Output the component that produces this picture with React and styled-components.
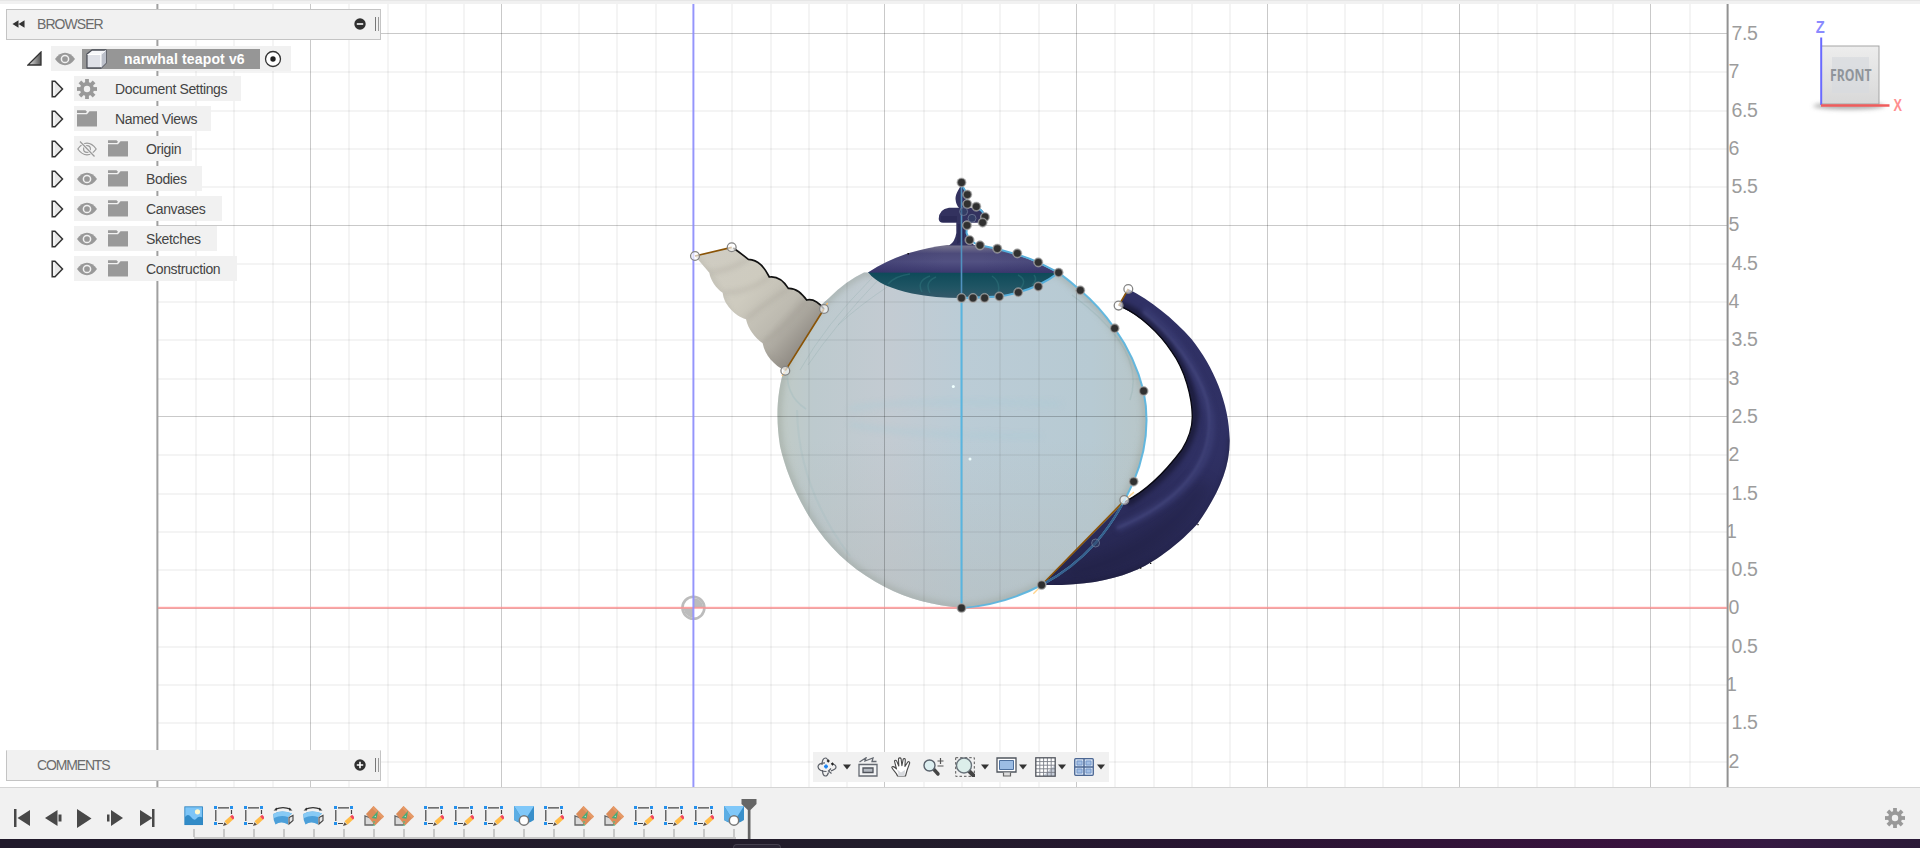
import React from "react";
import styled, { createGlobalStyle } from "styled-components";

const Global = createGlobalStyle`
  * { box-sizing: border-box; }
  body { margin: 0; overflow: hidden; background: #fff; font-family: "Liberation Sans", Arial, sans-serif; }
  svg { display: block; flex: none; }
`;

const Screen = styled.div`
  width: 1920px;
  height: 848px;
  display: flex;
  flex-direction: column;
`;
const TopStrip = styled.div`
  height: 4px;
  background: #f1f1f1;
  border-top: 1px solid #e6e6e6;
`;
const Viewport = styled.main`
  position: relative;
  flex: 1;
  min-height: 0;
  overflow: hidden;
`;
const SceneSvg = styled.svg`
  position: absolute;
  left: 0;
  top: -4px;
`;
const Overlay = styled.div`
  position: relative;
  height: 100%;
  display: flex;
  justify-content: space-between;
  padding: 5px 0 5px 6px;
`;
const LeftDock = styled.aside`
  width: 375px;
  display: flex;
  flex-direction: column;
`;
const PanelHead = styled.div`
  height: 31px;
  display: flex;
  align-items: center;
  background: #f1f1f1;
  border: 1px solid #c4c4c4;
  border-top-color: ${(p) => (p.$open ? "#c4c4c4" : "#f1f1f1")};
  padding: 0 0 1px 5px;
  margin: ${(p) => (p.$open ? "0" : "auto 0 1px")};
`;
const PanelTitle = styled.span`
  flex: 1;
  margin-left: 12px;
  font-size: 14px;
  letter-spacing: ${(p) => p.$tracking}px;
  color: #6b6b6b;
`;
const Collapse = styled.svg`
  width: 13px;
  height: 12px;
`;
const Grip = styled.span`
  width: 4px;
  height: 14px;
  margin: 0 1px 0 9px;
  border-left: 1px solid #777;
  border-right: 1px solid #999;
`;
const Tree = styled.ul`
  list-style: none;
  margin: 6px 0 0;
  padding: 0;
  display: flex;
  flex-direction: column;
  gap: 5px;
`;
const TreeRow = styled.li`
  height: 25px;
  display: flex;
  align-items: center;
  padding-left: ${(p) => (p.$root ? 21 : 45)}px;
`;
const RowBody = styled.div`
  height: 25px;
  width: ${(p) => p.$width}px;
  margin-left: ${(p) => (p.$root ? 9 : 10)}px;
  padding-left: ${(p) => (p.$root ? 4 : 3)}px;
  display: flex;
  align-items: center;
  gap: ${(p) => (p.$root ? 7 : 11)}px;
  background: #f1f1f1;
`;
const RowLabel = styled.span`
  margin-left: 7px;
  font-size: 14px;
  letter-spacing: -0.36px;
  color: #444;
  white-space: nowrap;
`;
const RootChip = styled.div`
  width: 178px;
  height: 20px;
  display: flex;
  align-items: center;
  padding-left: 4px;
  background: #969696;
  color: #fff;
  font-size: 14px;
  font-weight: bold;
  letter-spacing: 0.15px;
  white-space: nowrap;
`;
const ChipText = styled.span`
  margin-left: 17px;
`;
const ActiveMark = styled.svg`
  margin-left: -3px;
`;
const CubeHolder = styled.div`
  width: 120px;
  padding-top: 1px;
`;
const NavDock = styled.div`
  flex: 1;
  display: flex;
  align-items: flex-end;
  padding-left: 432px;
`;
const NavBar = styled.div`
  height: 30px;
  width: 296px;
  display: flex;
  align-items: center;
  background: #f1f1f1;
`;
const Tool = styled.span`
  margin-left: ${(p) => p.$gap}px;
`;
const Timeline = styled.footer`
  height: 52px;
  display: flex;
  background: #f1f1f1;
  border-top: 1px solid #d4d4d4;
`;
const Playback = styled.div`
  display: flex;
  align-items: center;
  gap: 11.7px;
  width: 178.5px;
  height: 60px;
  padding-left: 13px;
`;
const Features = styled.div`
  display: flex;
  flex: 1;
`;
const Feature = styled.div`
  width: 30px;
  height: 51px;
  display: flex;
  flex-direction: column;
  align-items: center;
  padding-top: 18px;
  background: linear-gradient(#c8c8c8, #c8c8c8) ${(p) => (p.$first ? "15px" : "0")} 49px / ${(p) => (p.$last ? "17px" : "100%")} 2px no-repeat;
  &::after {
    content: "";
    width: 2px;
    height: 8px;
    margin-top: 3px;
    background: #c8c8c8;
  }
`;
const Marker = styled.svg`
  margin: 10px 0 0 -8px;
`;
const Settings = styled.div`
  width: 35px;
  padding-top: 20px;
`;
const Desktop = styled.div`
  height: 9px;
  display: flex;
  padding-left: 733px;
  align-items: flex-end;
  background: linear-gradient(90deg, #211a2b 0%, #221d2b 48%, #281532 63%, #3a133f 86%, #351a42 92%, #2b1a38 100%);
`;
const TaskTab = styled.div`
  width: 48px;
  height: 4px;
  border: 1px solid #45404e;
  border-bottom: 0;
  border-radius: 4px 4px 0 0;
  background: #2b2635;
`;

const STEP = 38.3;
const OX = 693.4;
const OY = 608;
const vLines = [];
for (let i = -13; i <= 26; i++) vLines.push(i);
const hLines = [];
for (let i = -4; i <= 15; i++) hLines.push(i);

const dots = [
  [961.5, 182.5], [967.3, 194.6], [967.3, 204], [976.3, 206.6], [985, 217], [982.6, 222.6], [967, 225.3],
  [969.6, 240], [980, 245.3], [997.3, 248.6], [1017.3, 253.3], [1038.3, 262.3], [1058.6, 272.6],
  [1038.3, 286.6], [1018.3, 292.3], [999.3, 296.6], [984.6, 298], [973, 298], [961.5, 298],
  [1080.3, 290.3], [1114.6, 328.3], [1143.6, 391], [1133.6, 481.6], [1041.6, 585], [961.5, 608],
];
const faintDots = [[963.6, 211.6], [972, 218.3], [1095.6, 543]];
const rings = [[695, 256], [731.7, 247.3], [824, 309], [785.3, 370.7], [1128.3, 289], [1118.6, 305.6], [1124.3, 500]];

const BODY_RIGHT =
  "M1058.6 272.6 Q1070 281 1080.3 290.3 Q1100 307 1114.6 328.3 Q1135 357 1143.6 391 C1149 418 1147 450 1133.6 481.6 Q1118 517 1095.6 543 Q1072 569 1041.6 585 Q1004 605 961.5 608";
const BODY =
  BODY_RIGHT + " C933 605 908 599 885 587 C858 573 835 554 818 530 C800 505 786 473 780 446 C776 420 776 395 785 366 C797 328 814 311 829 298 Q846 281 864 272.6 Z";
const SPOUT =
  "M45 78 L155 52 Q180 68 205 88 C236 90 252 110 268 141 C296 137 313 156 325 175 C350 174 366 192 380 210 C400 205 420 222 432 237 L316 422 C283 408 254 374 248 340 C224 322 205 298 198 268 C163 256 131 222 128 188 C108 174 92 152 88 128 Z";
const HANDLE =
  "M385 57 C450 90 520 145 575 208 C640 290 688 400 689 510 C690 600 650 680 592 762 C520 840 440 890 394 906 C320 935 240 947 125 945 L375 695 C440 662 500 600 545 540 C565 508 577 480 577 440 C576 380 555 300 515 245 C480 190 420 135 356 107 Z";
const LID = "M868 272.5 Q885 261 909 253 Q930 247 947 245 L978 245 Q1012 251 1038 263 L1058 273 Z";

function Scene() {
  return (
    <SceneSvg width="1920" height="791" viewBox="0 0 1920 791">
      <defs>
        <linearGradient id="glass" x1="0" x2="1">
          <stop offset="0" stopColor="#c0cac5" />
          <stop offset=".1" stopColor="#bdcace" />
          <stop offset=".3" stopColor="#c3cbd2" />
          <stop offset=".5" stopColor="#bbccd6" />
          <stop offset=".85" stopColor="#b7cad3" />
          <stop offset="1" stopColor="#b8c6c8" />
        </linearGradient>
        <linearGradient id="glassShade" x1="0" x2="0" y1="0" y2="1">
          <stop offset=".5" stopColor="#b3b8b6" stopOpacity="0" />
          <stop offset="1" stopColor="#b3b8b6" stopOpacity=".45" />
        </linearGradient>
        <linearGradient id="lid" x1="0" x2="0" y1="0" y2="1">
          <stop offset="0" stopColor="#7b7890" />
          <stop offset=".3" stopColor="#4d4b7a" />
          <stop offset=".6" stopColor="#525182" />
          <stop offset="1" stopColor="#3b386e" />
        </linearGradient>
        <linearGradient id="lidSide" x1="0" x2="1">
          <stop offset="0" stopColor="#2f2d62" stopOpacity=".4" />
          <stop offset=".4" stopColor="#2f2d62" stopOpacity="0" />
          <stop offset=".6" stopColor="#2f2d62" stopOpacity="0" />
          <stop offset="1" stopColor="#2f2d62" stopOpacity=".3" />
        </linearGradient>
        <linearGradient id="inner" x1="0" x2="0" y1="0" y2="1">
          <stop offset="0" stopColor="#0d4a59" />
          <stop offset=".6" stopColor="#205564" />
          <stop offset="1" stopColor="#35586a" />
        </linearGradient>
        <linearGradient id="ivory" gradientUnits="userSpaceOnUse" x1="80" y1="80" x2="390" y2="340">
          <stop offset="0" stopColor="#cfccc2" />
          <stop offset=".4" stopColor="#cecbbf" />
          <stop offset=".7" stopColor="#bdbab0" />
          <stop offset="1" stopColor="#8e8982" />
        </linearGradient>
        <linearGradient id="navy" gradientUnits="userSpaceOnUse" x1="420" y1="100" x2="560" y2="900">
          <stop offset="0" stopColor="#303165" />
          <stop offset=".6" stopColor="#2f3063" />
          <stop offset="1" stopColor="#25254d" />
        </linearGradient>
        <clipPath id="bodyClip"><path d={BODY} /></clipPath>
        <clipPath id="spoutClip"><path d={SPOUT} /></clipPath>
        <clipPath id="handleClip"><path d={HANDLE} /></clipPath>
        <filter id="b3" colorInterpolationFilters="sRGB" x="-20%" y="-20%" width="140%" height="140%"><feGaussianBlur stdDeviation="3" /></filter>
        <filter id="b8" colorInterpolationFilters="sRGB" x="-50%" y="-50%" width="200%" height="200%"><feGaussianBlur stdDeviation="8" /></filter>
        <filter id="b16" colorInterpolationFilters="sRGB" x="-50%" y="-50%" width="200%" height="200%"><feGaussianBlur stdDeviation="20" /></filter>
      </defs>

      {/* the glass body sits behind the translucent grid */}
      <path d={BODY} fill="url(#glass)" />
      <path d={BODY} fill="url(#glassShade)" />
      <g clipPath="url(#bodyClip)">
        <path d={BODY} fill="none" stroke="#99a39b" strokeOpacity=".55" strokeWidth="7" filter="url(#b3)" />
        <path d="M788 365C785 385 792 400 806 409" fill="none" stroke="#9db9bd" strokeOpacity=".35" strokeWidth="1.5" />
        <path d="M797 410C798 460 815 510 850 556" fill="none" stroke="#9fbcc0" strokeOpacity=".25" strokeWidth="2" />
        <path d="M1072 295C1120 330 1142 365 1130 400" fill="none" stroke="#8fabab" strokeOpacity=".3" strokeWidth="1.5" />
        <path d="M872 278Q825 325 800 370M880 278Q835 325 808 365M890 285Q860 305 838 325" fill="none" stroke="#8fabab" strokeOpacity=".3" />
        <path d="M850 409Q900 398 1060 404M850 424Q900 436 1040 436" fill="none" stroke="#a3cbd8" strokeOpacity=".5" strokeWidth="3" filter="url(#b3)" />
      </g>

      <g shapeRendering="crispEdges">
        {vLines.map((i) => {
          const x = OX + i * STEP;
          return <rect key={i} x={Math.floor(x)} y="4" width={i % 5 ? 2 : 1} height="783" fill="#000" fillOpacity={i % 5 ? 0.045 : 0.21} />;
        })}
        {hLines.map((i) => (
          <rect key={i} x="157" y={Math.floor(OY - i * STEP)} width="1571" height={i % 5 ? 2 : 1} fill="#000" fillOpacity={i % 5 ? 0.045 : 0.21} />
        ))}
      </g>
      <rect x="156.4" y="4" width="2" height="783" fill="#a0a0a0" />
      <rect x="1726.6" y="4" width="2" height="783" fill="#929292" />
      <circle cx="693.4" cy="607.8" r="11" fill="#fff" stroke="#bcbcbc" strokeWidth="2.6" />
      <path d="M693.4 607.8V598A9.800 9.800 0 0 1 703.200 607.800ZM693.400 607.800V617.600A9.800 9.800 0 0 1 683.600 607.800Z" fill="#bcbcbc" />
      <rect x="158" y="606.8" width="1569" height="2" fill="#ff8f8f" fillOpacity=".8" />
      <rect x="692.4" y="4" width="2" height="783" fill="#8f8fff" fillOpacity=".9" />

      <g transform="translate(680 230) scale(.33333)">
        <path d={SPOUT} fill="url(#ivory)" />
        <g clipPath="url(#spoutClip)">
          <path d="M88 128Q140 125 205 88M128 188Q200 190 268 141M198 268Q250 225 325 175M248 340Q315 290 380 210" fill="none" stroke="#77736c" strokeOpacity=".16" strokeWidth="12" filter="url(#b8)" />
          <path d="M45 78Q90 120 130 215Q200 330 316 422" fill="none" stroke="#85857b" strokeOpacity=".18" strokeWidth="12" filter="url(#b8)" />
        </g>
        <path d="M160 54Q180 68 205 88C236 90 252 110 268 141C296 137 313 156 325 175C350 174 366 192 380 210C400 205 420 222 432 237" fill="none" stroke="#111" strokeWidth="5" />
        <path d="M45 78L155 52M432 237L316 422" stroke="#8a5407" strokeWidth="5" />
        <path d="M436 229l7-10M314 426l-8 12" stroke="#ffc26b" strokeWidth="4" />
      </g>

      <path d="M868 272 C876 283 892 289 912 293.5 Q936 298 961 298 Q985 299 1000 296.5 C1025 291 1045 285 1058 272Z" fill="url(#inner)" />
      <path d="M888 284Q895 276 910 274M922 292Q916 281 930 276M930 293Q924 282 936 277M998 293Q1001 282 992 276M1020 289Q1028 280 1018 275M1032 285Q1038 280 1034 275" fill="none" stroke="#337b80" strokeOpacity=".45" strokeWidth="1.5" />
      <path d={LID} fill="url(#lid)" />
      <path d={LID} fill="url(#lidSide)" />
      <path d="M961.5 184C959 190 955.5 193 955.5 199Q956 205 959 207.7L949 207.7Q939 209 938.7 219Q939 222.7 943 222.7L956.3 222.7L956.3 233Q955 242 949 245.5L975 245.5Q966 241 966.5 231L966.5 222.7L980 222.7Q986 222 985 215Q983 208 976 207.7L966 207.7Q969 199 966 191Z" fill="#33325f" />
      <path d="M941 216H957V222H941ZM958 224L964 224L964 240Q958 243 957 244Z" fill="#292854" fillOpacity=".7" />
      <rect x="907.5" y="253" width="1.5" height="1.5" fill="#111" />

      <g transform="translate(1000 270) scale(.33333)">
        <path d={HANDLE} fill="url(#navy)" />
        <g clipPath="url(#handleClip)">
          <path d="M360 105C420 130 480 180 515 235C555 300 584 380 584 440C580 490 560 530 530 570C490 620 440 660 380 700" fill="none" stroke="#191935" strokeOpacity=".85" strokeWidth="24" filter="url(#b8)" />
          <path d="M125 955C300 955 440 905 550 825C650 730 700 610 695 500" fill="none" stroke="#1d1d3c" strokeOpacity=".65" strokeWidth="18" filter="url(#b8)" />
          <path d="M200 910C380 880 540 760 610 640" fill="none" stroke="#191938" strokeOpacity=".3" strokeWidth="50" filter="url(#b16)" />
          <path d="M430 120C520 190 600 300 630 430C650 560 570 680 350 775" fill="none" stroke="#3f4179" strokeOpacity=".7" strokeWidth="22" filter="url(#b8)" />
          <path d="M430 125C510 190 590 290 621 390C650 540 580 680 350 775" fill="none" stroke="#5a5c93" strokeOpacity=".35" strokeWidth="5" filter="url(#b3)" />
        </g>
        <path d="M375 695C440 662 500 600 545 540C565 508 577 480 577 440C576 380 555 300 515 245C480 190 420 135 364 110" fill="none" stroke="#090912" strokeWidth="4" />
        <path d="M385 57L356 107M373 692L125 945" stroke="#8a5407" strokeWidth="5" />
        <path d="M376 690l26-24M120 951l-20 20" stroke="#ffd58e" strokeWidth="4" />
        <path d="M592 764h4M420 894h4M450 880h4" stroke="#111" strokeWidth="4" />
      </g>

      <path d={BODY_RIGHT} fill="none" stroke="#5db5de" strokeWidth="2" strokeOpacity=".95" />
      <path d="M1122 505Q1108 529 1095.6 543Q1072 569 1045 583" fill="none" stroke="#36608d" strokeWidth="2" />
      <path d="M1058.6 272.6L1038.3 262.3Q1012 251 980 245.3Q970 243 966.5 233L967 225M963 187Q967 192 967.3 204M976 207Q983 210 985 217M1058.6 272.6Q1035 291 999.3 296.6L961.5 298" fill="none" stroke="#55aedb" strokeWidth="2" />
      <path d="M961.5 183V298" stroke="#5092c0" strokeWidth="1.6" />
      <path d="M961.5 298V608" stroke="#59b5e0" strokeWidth="2" />
      <circle cx="953.3" cy="386.5" r="1.5" fill="#efffff" />
      <circle cx="970" cy="459" r="1.5" fill="#efffff" />

      {dots.map(([x, y]) => (
        <g key={`${x}-${y}`}>
          <circle cx={x} cy={y} r="4.6" fill="#777" stroke="#b5b5b5" strokeOpacity=".6" strokeWidth="1" />
          <circle cx={x} cy={y} r="3.4" fill="#303030" />
        </g>
      ))}
      {faintDots.map(([x, y]) => (
        <circle key={x} cx={x} cy={y} r="4" fill="#34486b" fillOpacity=".5" stroke="#77819d" strokeOpacity=".7" />
      ))}
      {rings.map(([x, y]) => (
        <circle key={x} cx={x} cy={y} r="4.4" fill="#fff" fillOpacity=".65" stroke="#858585" strokeWidth="1.3" />
      ))}

      <g fontFamily="Liberation Sans, Arial, sans-serif" fontSize="19.5" fill="#9c9c9c">
        {hLines.map((i) => {
          const whole = i % 2 === 0;
          const value = Math.abs(i / 2);
          return (
            <text key={i} x={value === 1 ? 1726 : whole ? 1728.5 : 1731.5} y={OY - i * STEP + 6.4} textLength={whole ? undefined : 26.4}>
              {value}
            </text>
          );
        })}
      </g>
    </SceneSvg>
  );
}

const ViewCube = () => (
  <svg width="110" height="110" viewBox="1800 10 110 110">
    <defs>
      <linearGradient id="face" x1="0" x2="0" y1="0" y2="1">
        <stop offset="0" stopColor="#ededed" />
        <stop offset="1" stopColor="#d8d8d8" />
      </linearGradient>
      <filter id="soft" x="-20%" y="-100%" width="140%" height="300%"><feGaussianBlur stdDeviation="2.2" /></filter>
    </defs>
    <ellipse cx="1849" cy="106" rx="36" ry="3.5" fill="#777" fillOpacity=".6" filter="url(#soft)" />
    <rect x="1821.5" y="46" width="57.5" height="58" fill="url(#face)" stroke="#a5a5a5" />
    <rect x="1832" y="57" width="37" height="36" fill="#d7dade" fillOpacity=".7" />
    <text x="1830" y="80.5" fontFamily="Open Sans, sans-serif" fontWeight="700" fontSize="15.5" fill="#8f949a" textLength="41.5" lengthAdjust="spacingAndGlyphs">FRONT</text>
    <path d="M1821.2 37.5V105" stroke="#6a6aff" strokeWidth="2" />
    <path d="M1821 105.5H1889.5" stroke="#f05c5c" strokeWidth="2.4" />
    <text x="1815.8" y="33" fontFamily="Liberation Sans, sans-serif" fontWeight="700" fontSize="16" fill="#8a8aff" textLength="9" lengthAdjust="spacingAndGlyphs">Z</text>
    <text x="1893.5" y="110.5" fontFamily="Liberation Sans, sans-serif" fontWeight="700" fontSize="16" fill="#ff8f8f" textLength="8.5" lengthAdjust="spacingAndGlyphs">X</text>
  </svg>
);

const Eye = ({ off }) => (
  <svg width="20" height="16" viewBox="0 0 20 16">
    {off ? (
      <g fill="none" stroke="#999" strokeWidth="1.2">
        <path d="M.8 8Q5 2.2 10 2.2T19.2 8Q15 13.8 10 13.8T.8 8Z" />
        <circle cx="10" cy="8" r="3.4" />
        <path d="M3 .5L17.5 15.5" stroke="#f1f1f1" strokeWidth="3" />
        <path d="M3 .5L17.5 15.5" />
      </g>
    ) : (
      <g>
        <path d="M0 8Q4.5 1.8 10 1.8T20 8Q15.5 14.2 10 14.2T0 8Z" fill="#999" />
        <circle cx="10" cy="8" r="3.6" fill="none" stroke="#f1f1f1" strokeWidth="1.5" />
      </g>
    )}
  </svg>
);
const Folder = () => (
  <svg width="20" height="17" viewBox="0 0 20 17" fill="#999">
    <path d="M0 .3H8.5L10 1.8L9 3H0ZM0 4.2H10L12.5 1.2H20V16.5H0Z" />
  </svg>
);
const Gear = () => (
  <svg width="20" height="20" viewBox="-10 -10 20 20">
    {[0, 45, 90, 135].map((a) => (
      <rect key={a} x="-1.9" y="-10" width="3.8" height="20" fill="#999" transform={`rotate(${a})`} />
    ))}
    <circle r="7" fill="#999" />
    <circle r="3.2" fill="#f1f1f1" />
  </svg>
);
const Expander = () => (
  <svg width="13" height="18" viewBox="0 0 13 18">
    <path d="M1.2 1.2H4L11.5 9L4 16.8H1.2Z" fill="#e8e8e8" stroke="#333" strokeWidth="1.5" />
    <path d="M3 2.8V15.2" stroke="#fff" />
  </svg>
);
const RootExpander = () => (
  <svg width="15" height="15" viewBox="0 0 15 15">
    <defs><linearGradient id="tri"><stop offset="0" stopColor="#eee" /><stop offset="1" stopColor="#555" /></linearGradient></defs>
    <path d="M1 14L14 1V14Z" fill="url(#tri)" stroke="#333" strokeWidth="1.3" />
  </svg>
);
const Component = () => (
  <svg width="21" height="20" viewBox="0 0 21 20">
    <path d="M1 5L6 1H20V14L15 19H1Z" fill="#f6f7fa" stroke="#4a4d57" strokeWidth="1.3" strokeLinejoin="round" />
    <path d="M15 5L20 1V14L15 19Z" fill="#bcc0ca" />
    <path d="M2 6H14.5V18H2Z" fill="#dfe1e8" />
    <path d="M15 5.5V18M1.5 5.5H15L19.5 1.5" stroke="#fff" fill="none" />
  </svg>
);
const RoundButton = ({ plus }) => (
  <svg width="12" height="12" viewBox="0 0 12 12">
    <circle cx="6" cy="6" r="5.7" fill="#303030" />
    <path d={plus ? "M2.8 6H9.2M6 2.8V9.2" : "M2.8 6H9.2"} stroke="#fff" strokeWidth="1.6" />
  </svg>
);

const rows = [
  { label: "Document Settings", gear: true, width: 167 },
  { label: "Named Views", width: 137 },
  { label: "Origin", eye: true, off: true, width: 118 },
  { label: "Bodies", eye: true, width: 128 },
  { label: "Canvases", eye: true, width: 148 },
  { label: "Sketches", eye: true, width: 143 },
  { label: "Construction", eye: true, width: 163 },
];

const Caret = () => (
  <svg width="8" height="6" viewBox="0 0 8 6"><path d="M0 .5H8L4 5.5Z" fill="#333" /></svg>
);
const Orbit = () => (
  <svg width="20" height="20" viewBox="0 0 20 20" fill="none" stroke="#5b5f67" strokeWidth="1.2">
    <path d="M9.5 14.5C4.5 14.5 1 12.5 1 9.8S4.5 6 8 5.8M14 6.5Q19 7.5 19 10T14 13.8M14 11.5L11.5 14L14.5 16.5" />
    <path d="M5.500 13C5.500 17 7 19 8.500 19S11 17 11.500 15.500M5 8C5 4 6 1 8.500 1Q10.500 1 11 5" />
    <path d="M9.8 4h3M11.3 2.5v3M14 7h3M15.5 5.500v3" stroke="#222" strokeWidth="1.1" />
    <path d="M7 9.5h4M9 7.5v4" stroke="#1b82f0" strokeWidth="1.8" />
  </svg>
);
const LookAt = () => (
  <svg width="20" height="20" viewBox="0 0 20 20" fill="none" stroke="#656a72" strokeWidth="1.3">
    <path d="M1 7.5H19V19H1Z" fill="#f3f4f5" />
    <path d="M1.5 5L8 .8L7 4L15 1L14 4.5H18.5" />
    <path d="M5 11H15V15.5H5Z" fill="#b4b9c0" stroke="#50545c" />
  </svg>
);
const Hand = () => (
  <svg width="20" height="20" viewBox="0 0 20 20">
    <path d="M6.5 19C5.5 15.5 2.5 14 .8 10.5C1 9 3 9.2 5.5 12L3.5 4.2C3.8 2.8 5.3 3 5.8 4.3L7.8 9L7.5 1.8C8 .6 9.7.6 10.1 1.9L10.9 8.7L12.2 2.2C12.8 1.1 14.3 1.5 14.3 2.8L13.9 9.5L16.8 5C17.8 4.2 19 5 18.6 6.3L16 13.5L14.5 19Z" fill="#fff" stroke="#4a4a4a" strokeWidth="1.1" strokeLinejoin="round" />
    <path d="M7 19C8 17 7 15 5.5 12L10 15.5L14 13L13.5 19Z" fill="#d8dade" />
  </svg>
);
const Zoom = () => (
  <svg width="21" height="20" viewBox="0 0 21 20">
    <path d="M11 12.5L15 17" stroke="#444" strokeWidth="3.4" strokeLinecap="round" />
    <circle cx="6.5" cy="8.5" r="5.5" fill="#dceef0" stroke="#59626c" strokeWidth="1.4" />
    <path d="M14.5 4h6M17.5 1v6M14.5 9h6" stroke="#555" strokeWidth="1.2" />
  </svg>
);
const ZoomWindow = () => (
  <svg width="20" height="20" viewBox="0 0 20 20">
    <path d="M.7.7H19.3V19.3H.7Z" fill="none" stroke="#555" strokeDasharray="2.5 2" />
    <path d="M14 14L18.5 18.5" stroke="#444" strokeWidth="4" strokeLinecap="round" />
    <circle cx="9" cy="8.5" r="7.5" fill="#dceeea" stroke="#69737b" strokeWidth="1.4" />
  </svg>
);
const Display = () => (
  <svg width="21" height="20" viewBox="0 0 21 20">
    <path d="M1 1H20V15H1Z" fill="#fff" stroke="#4f555e" strokeWidth="1.3" />
    <path d="M3.5 3.5H17.5V12.5H3.5Z" fill="#9cbde4" stroke="#4d709e" />
    <path d="M7.5 15.5V19H14.5V15.5" fill="#ddd" stroke="#666" strokeWidth="1.2" />
  </svg>
);
const Grid = () => (
  <svg width="21" height="20" viewBox="0 0 21 20">
    <rect x="1" y="1" width="19" height="18" fill="#fff" />
    <path d="M20 19V8L8 19Z" fill="#c5ccd8" />
    <path d="M4.8 1V19M8.6 1V19M12.4 1V19M16.2 1V19M1 4.6H20M1 8.2H20M1 11.8H20M1 15.4H20" stroke="#7b7f88" strokeWidth=".9" />
    <rect x=".8" y=".8" width="19.4" height="18.4" fill="none" stroke="#50545c" strokeWidth="1.3" />
  </svg>
);
const Layout = () => (
  <svg width="20" height="18" viewBox="0 0 20 18">
    <rect x=".7" y=".7" width="18.6" height="16.6" rx="1" fill="#d3e1f2" stroke="#4c6793" strokeWidth="1.3" />
    <path d="M10 1V17M1 9H19" stroke="#4c6793" strokeWidth="1.4" />
    <path d="M3 3H8V7H3ZM12 3H17V7H12ZM3 11H8V15H3ZM12 11H17V15H12Z" fill="#a3bfe4" stroke="#7698ca" />
  </svg>
);
const tools = [
  [Orbit, 4], [Caret, 6], [LookAt, 7], [Hand, 13], [Zoom, 11.5], [ZoomWindow, 11.5], [Caret, 6],
  [Display, 7], [Caret, 2], [Grid, 8], [Caret, 2], [Layout, 8], [Caret, 3],
];

const ImageIcon = () => (
  <svg width="20" height="20" viewBox="0 0 20 20">
    <rect x="1" y="1" width="18" height="18" fill="#7dc5f7" />
    <path d="M1 11Q4 7 7 11T12 13Q15 9 19 12V19H1Z" fill="#318bc7" />
    <circle cx="13.5" cy="5.8" r="2.6" fill="#fff9cd" />
    <rect x=".8" y=".8" width="17.6" height="17.8" fill="none" stroke="#2f86c3" strokeWidth=".9" />
  </svg>
);
const SketchIcon = () => (
  <svg width="20" height="20" viewBox="0 0 20 20">
    <path d="M4 1.8H15M1.8 4V15M4 17.5H9M17.5 4V8" stroke="#454545" strokeWidth="1.2" />
    <path d="M0 0H3V3H0ZM16 0H19V3H16ZM0 16H3V19H0Z" fill="#2490ec" />
    <path d="M12 17L18.5 11.2" stroke="#ffbd49" strokeWidth="4.4" />
    <path d="M17.5 12L19.5 10.2" stroke="#f4455e" strokeWidth="4" />
    <path d="M9 20L10.5 16.3L13 18.7Z" fill="#5c5145" />
  </svg>
);
const SweepIcon = () => (
  <svg width="21" height="20" viewBox="0 0 21 20">
    <path d="M.3 8Q8 3.500 19 7.500L15 11V18.500Q8 14.500 2.500 18.500Q0 14 .3 8Z" fill="#4b9fd9" />
    <path d="M.3 8Q9 3.500 19 7.500L15 11Q8 8.500 1 12Z" fill="#87caf5" />
    <path d="M2.500 3.200Q10 0 17.500 3.200" fill="none" stroke="#333" strokeWidth="1.3" />
    <path d="M.5 4.500L4 1.500V4.500ZM19.500 4.500L16 1.500V4.500Z" fill="#333" />
    <path d="M16 11.500L20 9.500V14.500L16 18Z" fill="#e7e7e7" stroke="#444" strokeWidth="1.1" />
  </svg>
);
const PlaneIcon = () => (
  <svg width="20" height="20" viewBox="0 0 20 20">
    <path d="M1 10V19H9L12 14Z" fill="#d9d9d9" stroke="#666" strokeWidth="1.3" />
    <path d="M2 8L9.5 0L20 10.5L11 19.5L9 17Z" fill="#db8c59" />
    <path d="M9.5 0L20 10.5L18 12.5L8 2Z" fill="#e69a68" />
    <path d="M9 11.5L13 7L12 12Z" fill="#fff" stroke="#4aaa76" strokeWidth="1.3" />
    <path d="M10 15V20" stroke="#54b987" strokeWidth="1.3" strokeDasharray="2 1" />
  </svg>
);
const ConeIcon = () => (
  <svg width="20" height="20" viewBox="0 0 20 20">
    <path d="M0 0H20V14Q16 17 12 17.5H8Q4 17 0 14Z" fill="#398fca" />
    <path d="M0 0H20L13 11H7Z" fill="#80c8f9" />
    <path d="M0 0L7 11L5 16Q2 15 0 14Z" fill="#5bade4" />
    <circle cx="10" cy="14.5" r="4.7" fill="#fff" stroke="#777" strokeWidth="1.5" />
  </svg>
);
const kinds = { i: ImageIcon, s: SketchIcon, w: SweepIcon, p: PlaneIcon, c: ConeIcon };
const features = "isswwsppssscsppsssc".split("");

const playIcons = [
  ["M1 0H3.5V18H1ZM17 1V17L4.500 9Z", 17],
  ["M0 9L12.5 1V17ZM13.5 5.500H16.500V12.500H13.500Z", 17],
  ["M1 0V19L15.5 9.5Z", 16],
  ["M0 5.5H2.5V12.5H0ZM4 1V17L16 9Z", 17],
  ["M1 1V17L13.5 9ZM13 0H15.5V18H13Z", 17],
];

export default function App() {
  return (
    <Screen>
      <Global />
      <TopStrip />
      <Viewport>
        <Scene />
        <Overlay>
          <LeftDock>
            <PanelHead $open>
              <Collapse viewBox="0 0 14 12" fill="#333"><path d="M7 2V10L.5 6ZM13.5 2V10L7 6Z" /></Collapse>
              <PanelTitle $tracking={-0.95}>BROWSER</PanelTitle>
              <RoundButton />
              <Grip />
            </PanelHead>
            <Tree>
              <TreeRow $root>
                <RootExpander />
                <RowBody $root $width={240}>
                  <Eye />
                  <RootChip>
                    <Component />
                    <ChipText>narwhal teapot v6</ChipText>
                  </RootChip>
                  <ActiveMark width="18" height="18" viewBox="0 0 18 18">
                    <circle cx="9" cy="9" r="7.5" fill="#fff" stroke="#333" strokeWidth="1.3" />
                    <circle cx="9" cy="9" r="2.7" fill="#222" />
                  </ActiveMark>
                </RowBody>
              </TreeRow>
              {rows.map((r) => (
                <TreeRow key={r.label}>
                  <Expander />
                  <RowBody $width={r.width}>
                    {r.eye && <Eye off={r.off} />}
                    {r.gear ? <Gear /> : <Folder />}
                    <RowLabel>{r.label}</RowLabel>
                  </RowBody>
                </TreeRow>
              ))}
            </Tree>
            <PanelHead>
              <Collapse />
              <PanelTitle $tracking={-1.15}>COMMENTS</PanelTitle>
              <RoundButton plus />
              <Grip />
            </PanelHead>
          </LeftDock>
          <NavDock>
            <NavBar>
              {tools.map(([Icon, gap], i) => (
                <Tool key={i} $gap={gap}><Icon /></Tool>
              ))}
            </NavBar>
          </NavDock>
          <CubeHolder><ViewCube /></CubeHolder>
        </Overlay>
      </Viewport>
      <Timeline>
        <Playback>
          {playIcons.map(([d, w]) => (
            <svg key={d} width={w + 3} height="19" viewBox={`0 0 ${w + 3} 19`} fill="#484848"><path d={d} /></svg>
          ))}
        </Playback>
        <Features>
          {features.map((f, i) => {
            const Icon = kinds[f];
            return (
              <Feature key={i} $first={i === 0} $last={i === features.length - 1}><Icon /></Feature>
            );
          })}
          <Marker width="16" height="42" viewBox="0 0 16 42" fill="#666">
            <path d="M.5 1H15.5V6L9.5 12V42H6.8V12L.5 6Z" />
          </Marker>
        </Features>
        <Settings><Gear /></Settings>
      </Timeline>
      <Desktop><TaskTab /></Desktop>
    </Screen>
  );
}
